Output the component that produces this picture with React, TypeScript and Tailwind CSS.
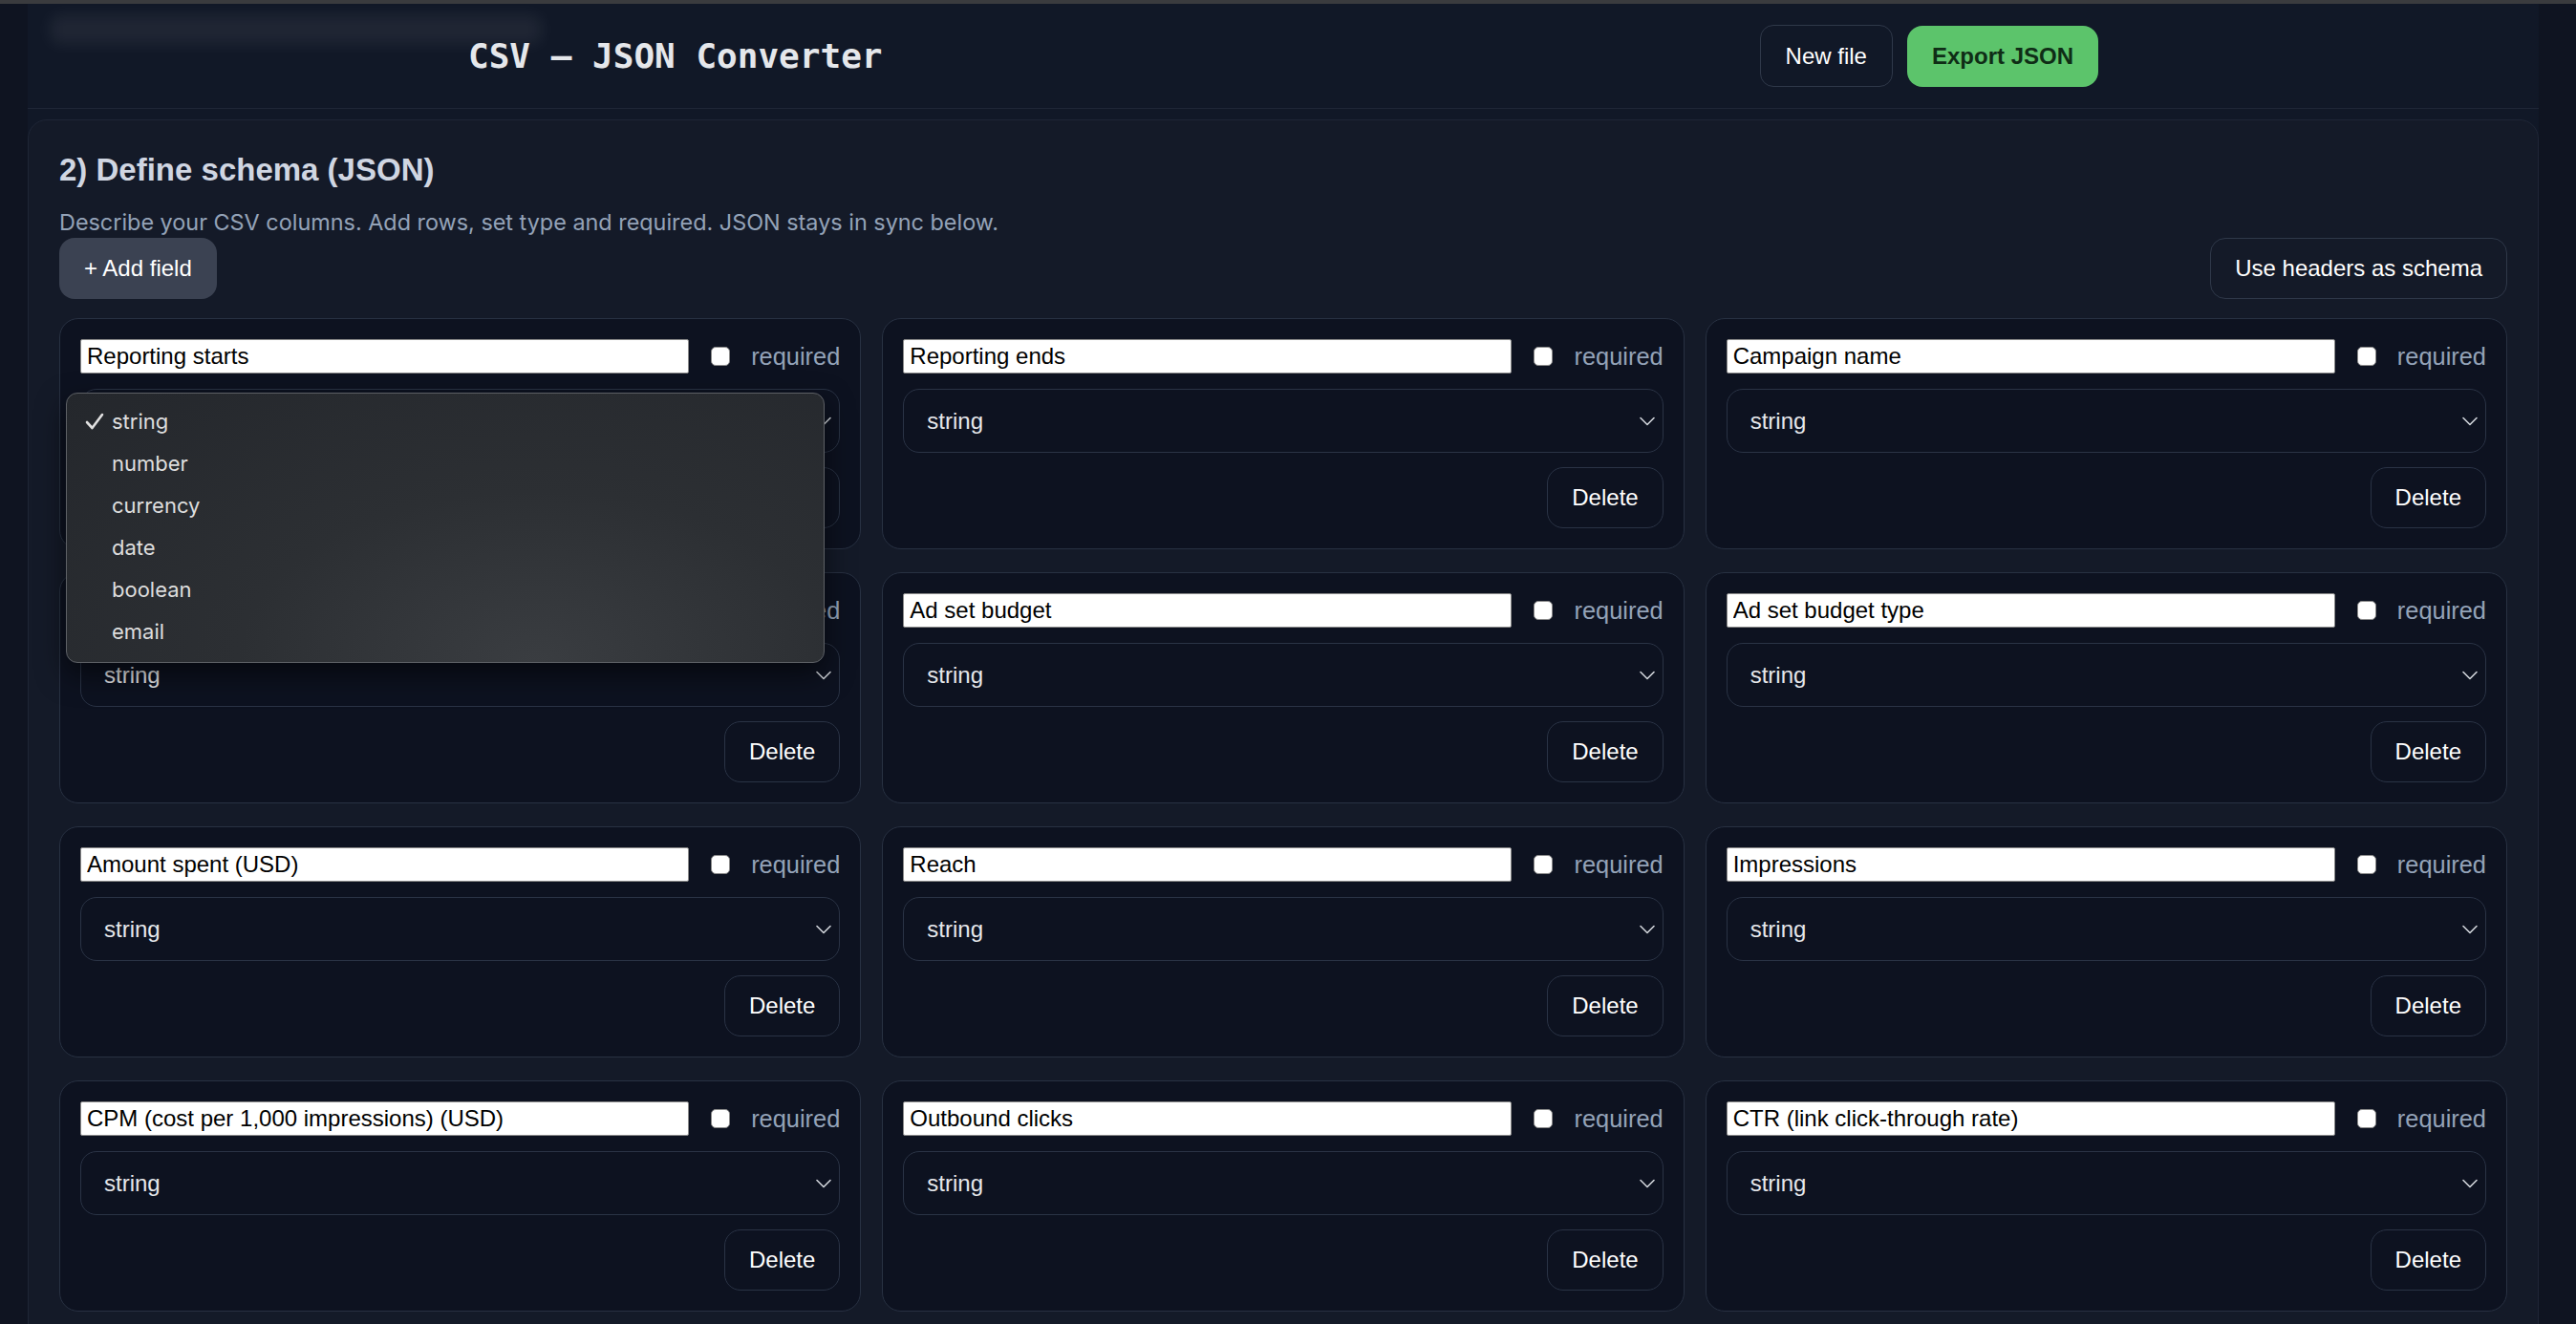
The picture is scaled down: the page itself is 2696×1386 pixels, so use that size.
import React from "react";

const fields = [
  "Reporting starts",
  "Reporting ends",
  "Campaign name",
  "Ad set name",
  "Ad set budget",
  "Ad set budget type",
  "Amount spent (USD)",
  "Reach",
  "Impressions",
  "CPM (cost per 1,000 impressions) (USD)",
  "Outbound clicks",
  "CTR (link click-through rate)",
];

const options = ["string", "number", "currency", "date", "boolean", "email"];

function Chevron() {
  return (
    <svg width="16" height="10" viewBox="0 0 16 10" fill="none">
      <path d="M1 1.5 L8 8.5 L15 1.5" stroke="#d1d5db" strokeWidth="1.6" strokeLinecap="round" strokeLinejoin="round" />
    </svg>
  );
}

function Dropdown() {
  return (
    <div className="absolute left-[6px] top-[77px] z-50 w-[794px] h-[283px] rounded-[12px] border border-[#5d6065] bg-[radial-gradient(ellipse_at_62%_100%,#3a3d41_0%,#2c2f33_45%,#24272c_100%)] shadow-[0_12px_30px_rgba(0,0,0,0.55)] pt-[7px] font-['Inter',sans-serif] text-[22px] text-[#dedede]">
      {options.map((o, i) => (
        <div key={o} className="h-[44px] flex items-center pl-[19px]">
          <span className="w-[28px] flex items-center">
            {i === 0 ? (
              <svg width="20" height="18" viewBox="0 0 20 18" fill="none">
                <path d="M2 10 L7.5 16 L18 2" stroke="#e0e0e0" strokeWidth="2.6" strokeLinecap="round" strokeLinejoin="round" />
              </svg>
            ) : null}
          </span>
          <span>{o}</span>
        </div>
      ))}
    </div>
  );
}

function FieldCard({ name, open }: { name: string; open?: boolean }) {
  return (
    <div className="relative rounded-[20px] border border-[#283142] bg-[#0d1220] p-[21px] flex flex-col">
      <div className="flex items-center h-[36px]">
        <input
          defaultValue={name}
          className="flex-1 min-w-0 h-[36px] bg-white border border-[#8a8a8a] rounded-[2px] px-[6px] text-[24px] leading-none text-black font-['Liberation_Sans',Arial,sans-serif] outline-none"
        />
        <div className="ml-[23px] w-[20px] h-[20px] rounded-[5px] border border-[#8a8a8a] bg-white shrink-0" />
        <span className="ml-[22px] text-[25.4px] text-[#94a3b8] font-['Liberation_Sans',Arial,sans-serif]">required</span>
      </div>
      <div className="mt-[16px] h-[67px] rounded-[17px] border border-[#2a3345] pl-[24px] pr-[8px] flex items-center justify-between">
        <span className="text-[24px] text-[#e5e7eb] font-['Liberation_Sans',Arial,sans-serif]">string</span>
        <Chevron />
      </div>
      <div className="mt-[15px] flex justify-end">
        <button className="h-[64px] px-[25px] rounded-[17px] border border-[#2a3345] bg-[#0d1220] text-[24px] text-white font-['Liberation_Sans',Arial,sans-serif]">
          Delete
        </button>
      </div>
      {open ? <Dropdown /> : null}
    </div>
  );
}

export default function App() {
  return (
    <div className="relative w-[2696px] h-[1386px] overflow-hidden bg-[#0f1421] flex flex-col">
      <div className="h-[4px] shrink-0 bg-[#3a3b3e]" />
      <div className="flex-1 ml-[29px] mr-[39px] bg-[#111827] flex flex-col">
        <header className="relative h-[110px] shrink-0 border-b border-[#1f2636] flex items-center justify-between pl-[461px] pr-[461px]">
          <div className="absolute left-[23px] top-[12px] w-[515px] h-[30px] rounded-[10px] bg-[#ffffff10] blur-[8px]" />
          <h1 className="text-[36px] font-bold text-[#e5e7eb] font-['DejaVu_Sans_Mono',monospace] leading-none">
            CSV – JSON Converter
          </h1>
          <div className="flex items-center gap-[15px]">
            <button className="h-[65px] px-[26px] rounded-[14px] border border-[#2f3849] bg-[#111827] text-[24px] text-white font-['Liberation_Sans',Arial,sans-serif]">
              New file
            </button>
            <button className="h-[64px] px-[26px] rounded-[16px] bg-[#5cc46b] text-[24px] font-bold text-[#0f2d16] font-['Liberation_Sans',Arial,sans-serif]">
              Export JSON
            </button>
          </div>
        </header>
        <main className="pt-[11px]">
          <section className="rounded-[20px] border border-[#1f2636] bg-[#141a28] p-[32px]">
            <h2 className="text-[33px] leading-[40px] font-bold text-[#d0d6e2] font-['Liberation_Sans',Arial,sans-serif]">
              2) Define schema (JSON)
            </h2>
            <p className="mt-[19px] text-[23.4px] leading-[31px] text-[#94a3b8] font-['Inter',sans-serif]">
              Describe your CSV columns. Add rows, set type and required. JSON stays in sync below.
            </p>
            <div className="mt-[1px] flex items-center justify-between">
              <button className="h-[64px] px-[26px] rounded-[16px] bg-[#3b4252] text-[24px] text-white font-['Liberation_Sans',Arial,sans-serif]">
                + Add field
              </button>
              <button className="h-[64px] px-[25px] rounded-[16px] border border-[#2f3849] bg-[#141a28] text-[24px] text-white font-['Liberation_Sans',Arial,sans-serif]">
                Use headers as schema
              </button>
            </div>
            <div className="mt-[20px] grid grid-cols-3 gap-x-[22px] gap-y-[24px]">
              {fields.map((f, i) => (
                <FieldCard key={i} name={f} open={i === 0} />
              ))}
            </div>
          </section>
        </main>
      </div>
    </div>
  );
}
